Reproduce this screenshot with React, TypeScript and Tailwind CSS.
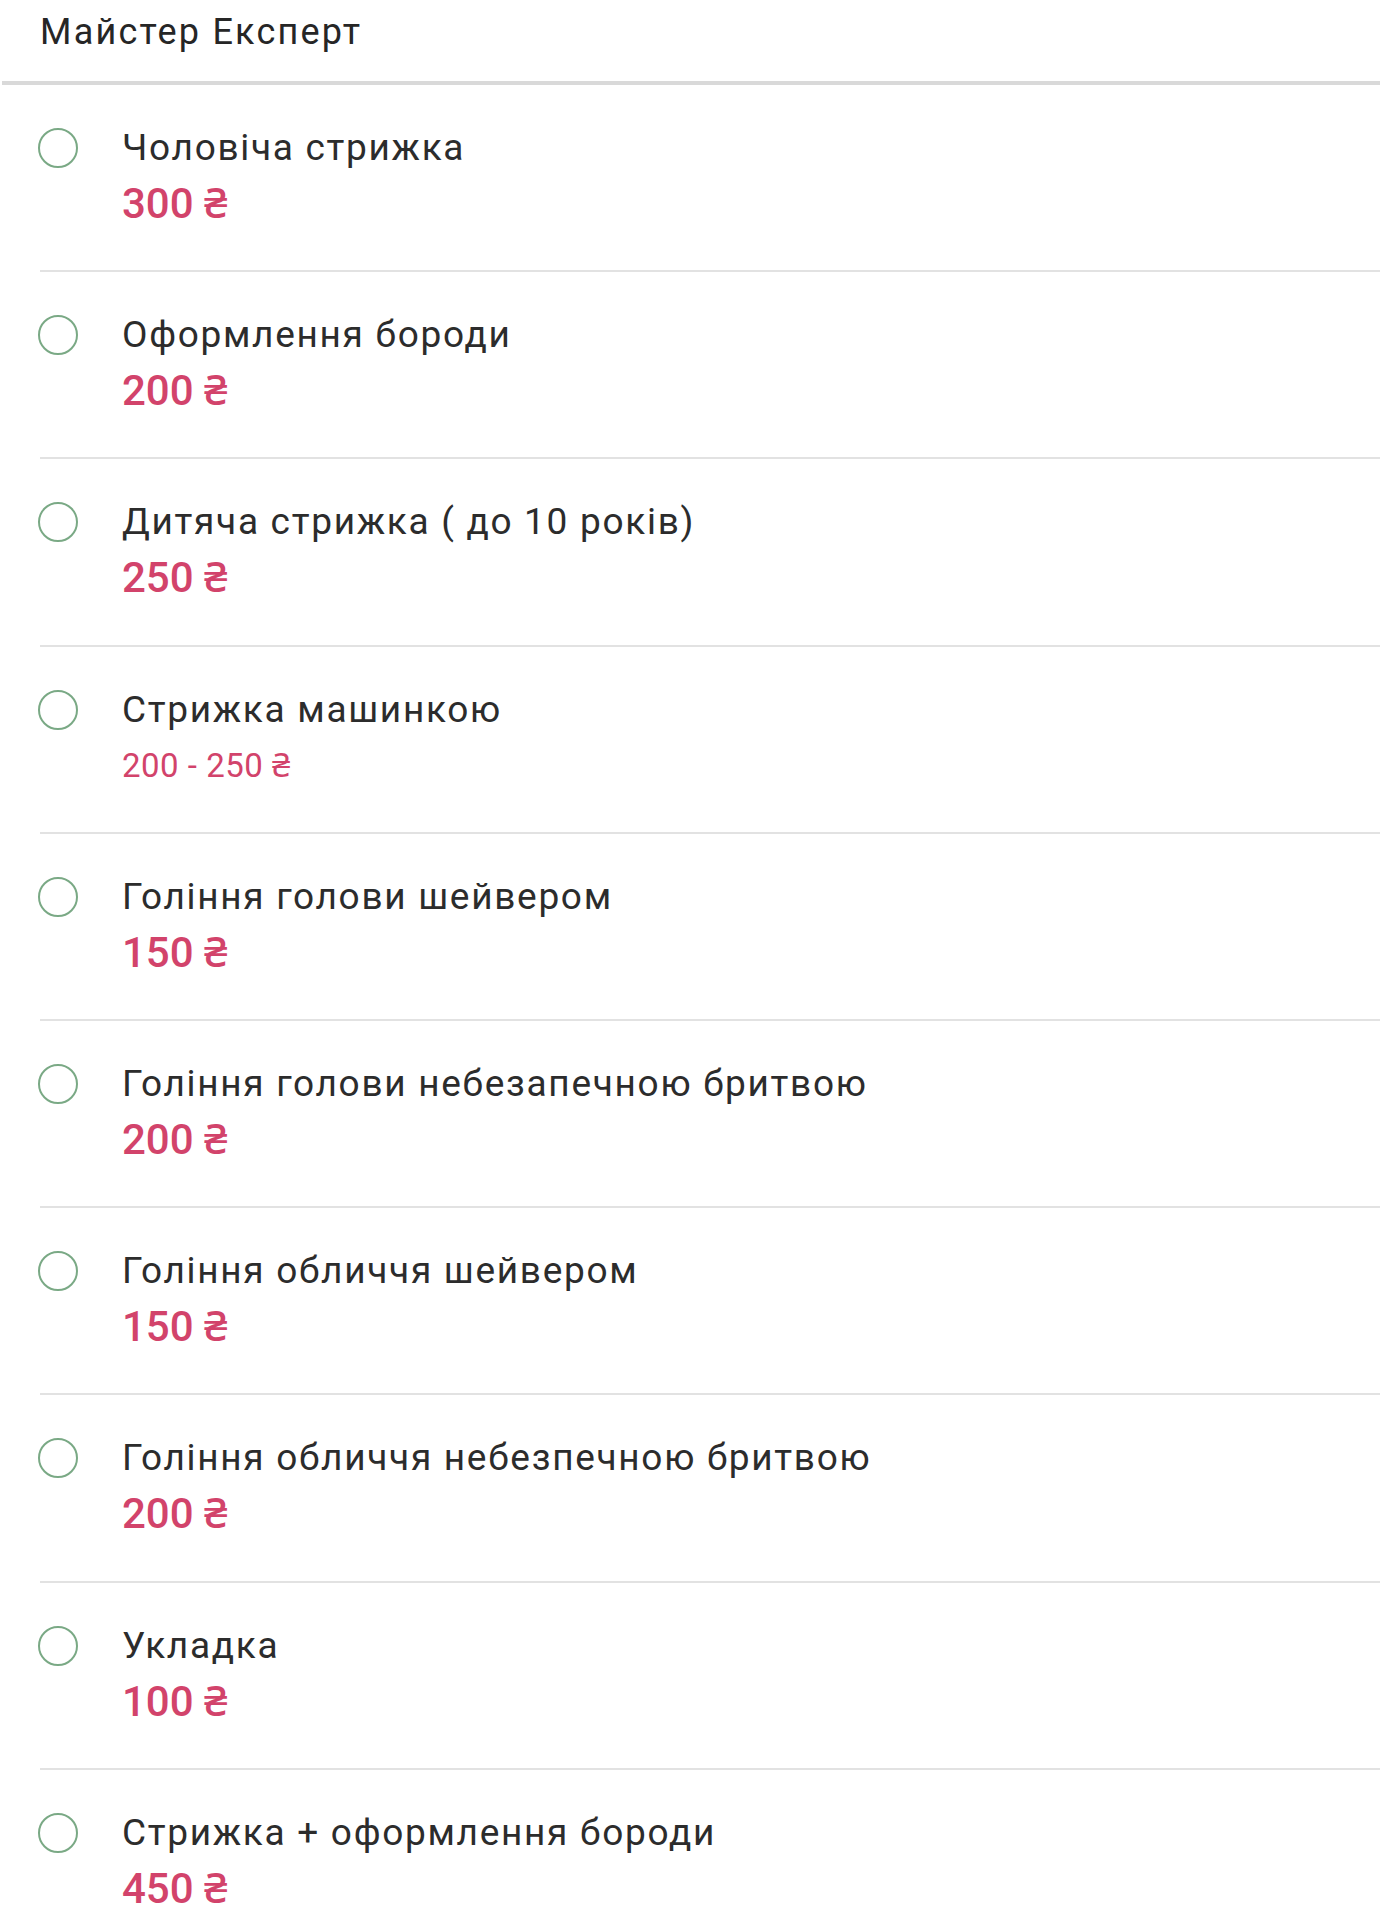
const services: { name: string; price: string; range?: boolean }[] = [
  { name: "Чоловіча стрижка", price: "300 ₴" },
  { name: "Оформлення бороди", price: "200 ₴" },
  { name: "Дитяча стрижка ( до 10 років)", price: "250 ₴" },
  { name: "Стрижка машинкою", price: "200 - 250 ₴", range: true },
  { name: "Гоління голови шейвером", price: "150 ₴" },
  { name: "Гоління голови небезапечною бритвою", price: "200 ₴" },
  { name: "Гоління обличчя шейвером", price: "150 ₴" },
  { name: "Гоління обличчя небезпечною бритвою", price: "200 ₴" },
  { name: "Укладка", price: "100 ₴" },
  { name: "Стрижка + оформлення бороди", price: "450 ₴" },
];

function Radio() {
  return <div className="w-[40px] h-[40px] rounded-full border-2 border-[#7aa985] flex-shrink-0" />;
}

export default function App() {
  return (
    <div className="min-h-screen bg-white font-['Roboto','Noto_Sans',sans-serif]">
      {/* Header */}
      <div className="pl-[40px] pt-[12px] pb-[28px] text-[36px] leading-[41px] tracking-[2.2px] text-[#262626]">
        Майстер Експерт
      </div>
      <div className="ml-[2px] h-[4px] bg-[#d9d9d9]" />

      {/* Services */}
      <div className="pl-[40px]">
        {services.map((s) => (
          <div key={s.name} className="border-b-2 border-[#e2e2e2] pt-[41px] pb-[42.2px]">
            <div className="flex gap-[44px] -ml-[2px]">
              <div className="h-[44px] flex items-center">
                <Radio />
              </div>
              <div className="flex flex-col gap-[10px]">
                <div className="text-[37px] leading-[44px] tracking-[1.7px] text-[#2c2c2c]">{s.name}</div>
                {s.range ? (
                  <div className="text-[33px] leading-[48px] tracking-[0.5px] text-[#d2436b]">{s.price}</div>
                ) : (
                  <div className="text-[42px] leading-[48px] font-medium text-[#d2436b]">{s.price}</div>
                )}
              </div>
            </div>
          </div>
        ))}
      </div>
    </div>
  );
}
